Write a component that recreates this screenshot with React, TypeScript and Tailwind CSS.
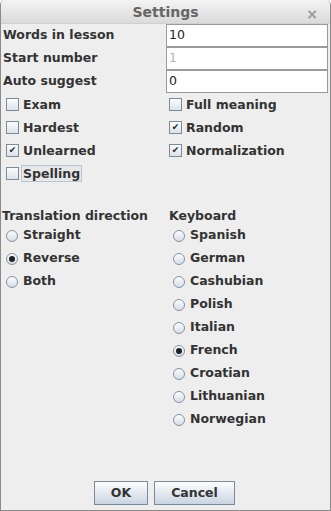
import { useState } from "react";

const font = { fontFamily: '"DejaVu Sans", sans-serif' };

function Check({ label, checked, focus }: { label: string; checked?: boolean; focus?: boolean }) {
  return (
    <div className="h-[23px] flex items-center">
      <span className="w-[13px] h-[13px] border border-[#7c8b9a] bg-gradient-to-b from-[#fbfcfd] to-[#dde3ea] flex items-center justify-center text-[9px] leading-none text-[#222]">
        {checked ? "✔" : ""}
      </span>
      <span className={"ml-[2px] px-[1px] text-[12.5px] font-bold text-[#333] leading-[15px] " + (focus ? "border border-[#b8c6d4] bg-[#e8e8e8]" : "border border-transparent")}>
        {label}
      </span>
    </div>
  );
}

function Radio({ label, checked }: { label: string; checked?: boolean }) {
  return (
    <div className="h-[23px] flex items-center">
      <span className="w-[12px] h-[12px] rounded-full border border-[#8593a1] bg-gradient-to-b from-[#fbfcfd] to-[#d6dee6] flex items-center justify-center">
        {checked && <span className="w-[6px] h-[6px] rounded-full bg-[#222]" />}
      </span>
      <span className="ml-[5px] text-[12.5px] font-bold text-[#333]">{label}</span>
    </div>
  );
}

function Field({ value, disabled }: { value: string; disabled?: boolean }) {
  return (
    <div className="flex-1 h-[23px] border border-[#9a9a9a] bg-white flex items-center px-[2px] text-[12.5px]" style={{ color: disabled ? "#b5b5b5" : "#222" }}>
      {value}
    </div>
  );
}

export default function App() {
  const [dir] = useState("Reverse");
  const [kb] = useState("French");

  return (
    <div className="w-[331px] h-[511px] bg-[#eeeeee] flex flex-col border-x border-b border-[#8a8a8a] rounded-t-[5px] overflow-hidden" style={font}>
      <div className="h-[24px] shrink-0 relative flex items-center justify-center pt-[2px] bg-gradient-to-b from-[#f4f4f4] to-[#dadada] border-b border-[#d0d0d0]">
        <span className="text-[14px] font-bold text-[#666]">Settings</span>
        <span className="absolute right-[12px] top-[4px] text-[14px] font-bold text-[#999]">×</span>
      </div>

      <div className="flex flex-col">
        {[
          ["Words in lesson", "10", false],
          ["Start number", "1", true],
          ["Auto suggest", "0", false],
        ].map(([l, v, d]) => (
          <div key={l as string} className="flex items-center h-[23px]">
            <span className="w-[165px] pl-[2px] text-[12.5px] font-bold text-[#333]">{l as string}</span>
            <div className="flex flex-1 pr-[2px]">
              <Field value={v as string} disabled={d as boolean} />
            </div>
          </div>
        ))}
      </div>

      <div className="flex">
        <div className="w-[167px] pl-[5px] flex flex-col">
          <Check label="Exam" />
          <Check label="Hardest" />
          <Check label="Unlearned" checked />
          <Check label="Spelling" focus />
        </div>
        <div className="flex-1 pl-[1px] flex flex-col">
          <Check label="Full meaning" />
          <Check label="Random" checked />
          <Check label="Normalization" checked />
        </div>
      </div>

      <div className="flex mt-[23px]">
        <div className="w-[166px] flex flex-col">
          <span className="pl-[1px] h-[16px] text-[12.5px] font-bold text-[#333] leading-[16px]">Translation direction</span>
          <div className="pl-[5px] flex flex-col">
            {["Straight", "Reverse", "Both"].map((r) => (
              <Radio key={r} label={r} checked={r === dir} />
            ))}
          </div>
        </div>
        <div className="flex-1 flex flex-col">
          <span className="pl-[2px] h-[16px] text-[12.5px] font-bold text-[#333] leading-[16px]">Keyboard</span>
          <div className="pl-[6px] flex flex-col">
            {["Spanish", "German", "Cashubian", "Polish", "Italian", "French", "Croatian", "Lithuanian", "Norwegian"].map((r) => (
              <Radio key={r} label={r} checked={r === kb} />
            ))}
          </div>
        </div>
      </div>

      <div className="flex-1" />
      <div className="flex justify-center gap-[6px] pb-[5px] pr-[2px]">
        <button className="w-[54px] h-[24px] border border-[#7c8b9a] bg-gradient-to-b from-[#fdfdfe] to-[#c9d5e2] text-[12.5px] font-bold text-[#333]">OK</button>
        <button className="w-[81px] h-[24px] border border-[#7c8b9a] bg-gradient-to-b from-[#fdfdfe] to-[#c9d5e2] text-[12.5px] font-bold text-[#333]">Cancel</button>
      </div>
    </div>
  );
}
